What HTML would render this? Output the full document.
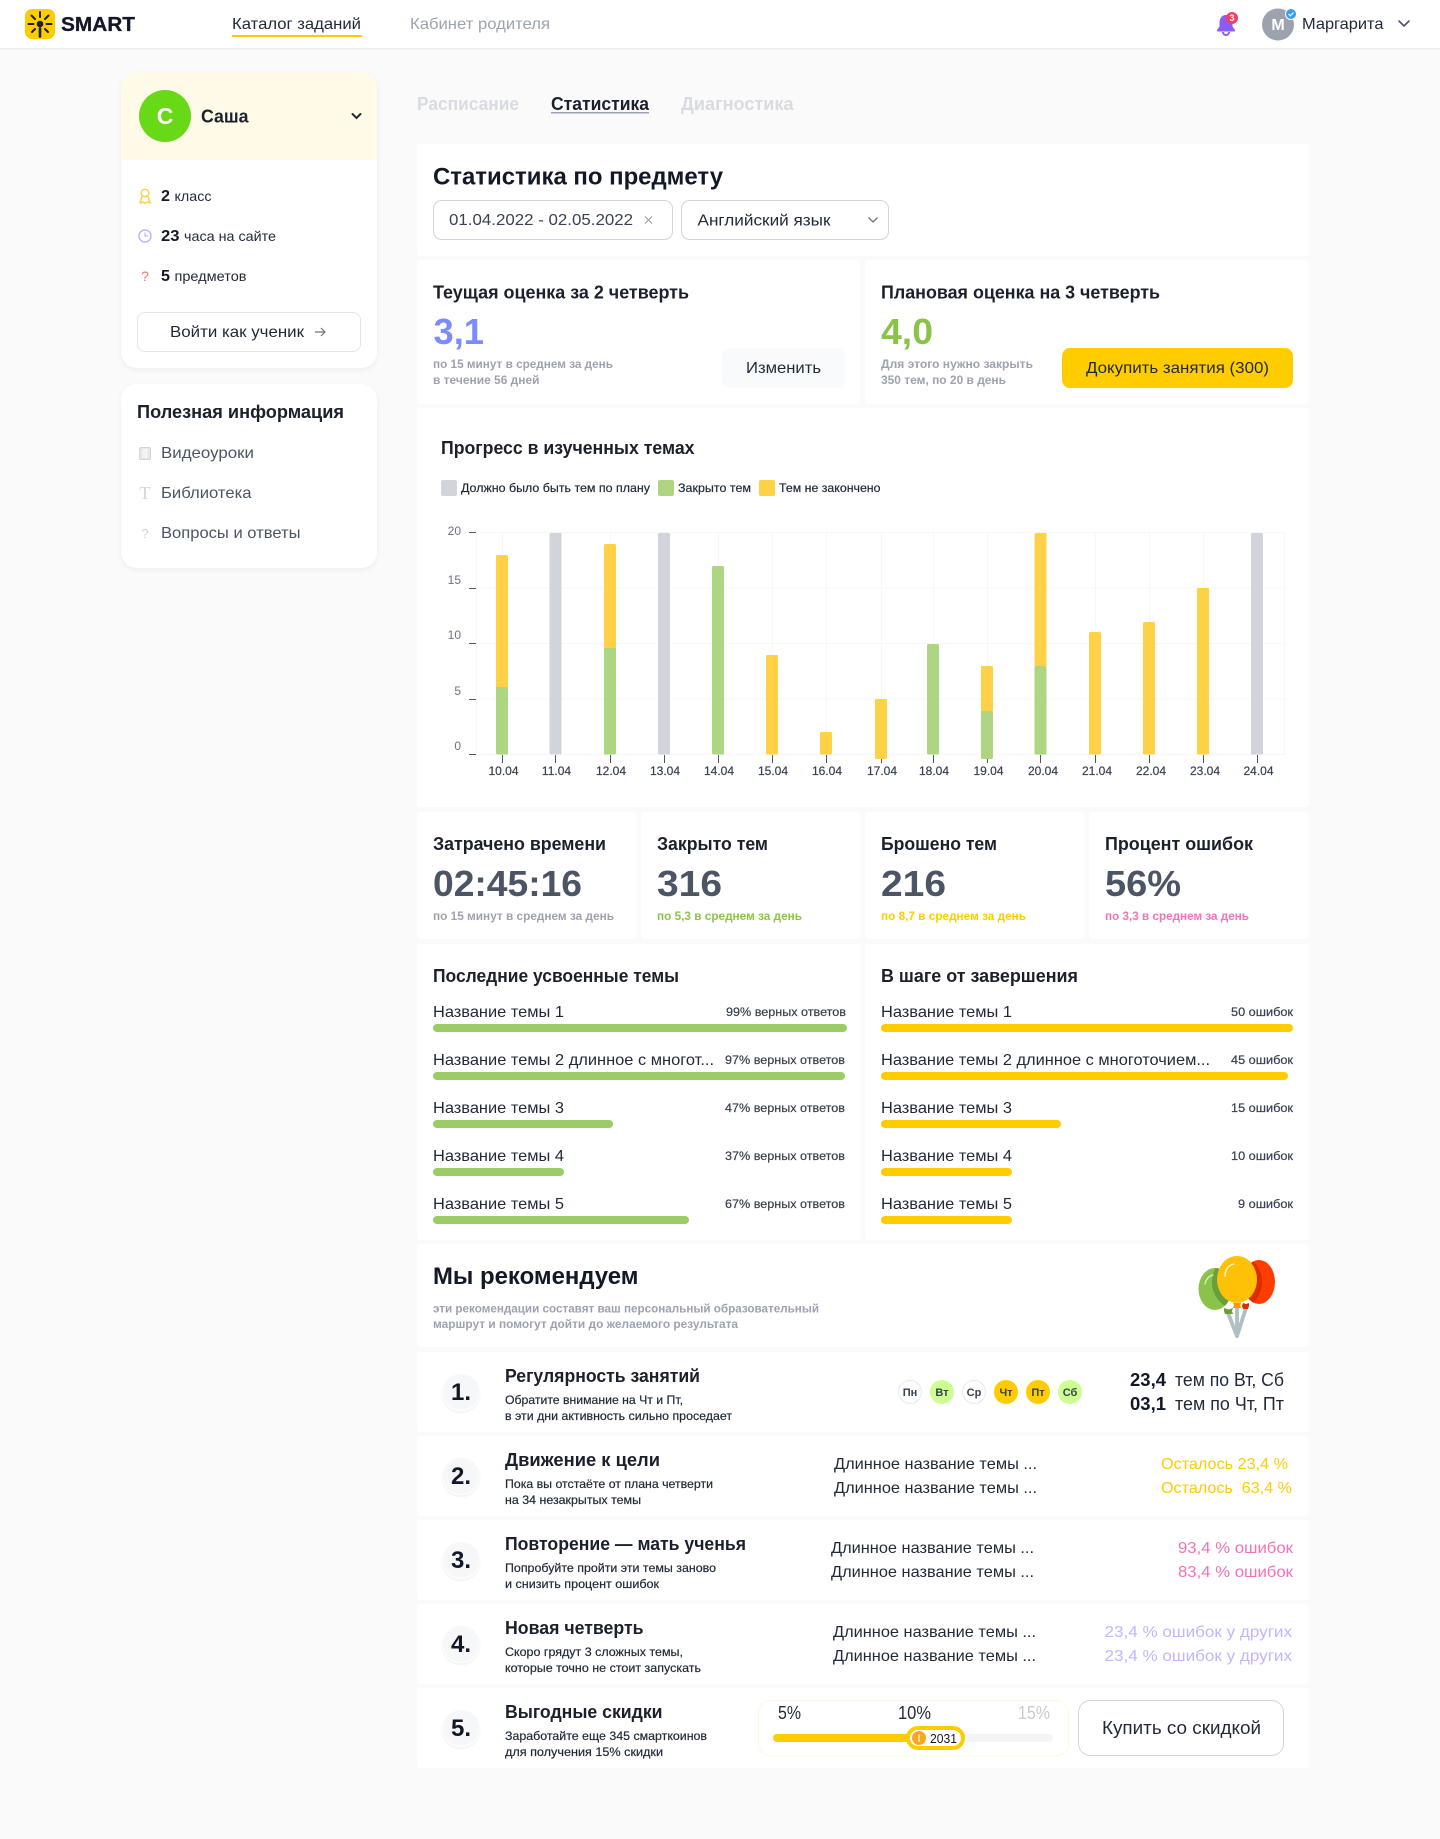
<!DOCTYPE html>
<html lang="ru">
<head>
<meta charset="utf-8">
<title>SMART — Статистика</title>
<style>
html,body{margin:0;padding:0;background:#fafafa}
body{position:relative;width:1440px;height:1839px;overflow:hidden;font-family:"Liberation Sans",sans-serif}
.b{position:absolute;background:#fff;border-radius:4px}
.s{border-radius:16px;box-shadow:0 2px 6px rgba(17,24,39,.05)}
svg{position:absolute;left:0;top:0}
text{font-family:"Liberation Sans",sans-serif;fill:#111827;font-size:16px}
.h18{font-size:18px;font-weight:700;fill:#1a202c}
.h24{font-size:24px;font-weight:700;fill:#111827}
.m16{font-size:16px;fill:#1f2937}
.m18{font-size:18px;fill:#1f2937}
.g12{font-size:12px;font-weight:700;fill:#9ca3af}
.d12{font-size:12px;fill:#1f2937;stroke:#1f2937;stroke-width:.2}
.b12{font-size:12px;stroke:#1f2937;stroke-width:.2;fill:#1f2937}
.l12{font-size:12px;fill:#374151;stroke:#374151;stroke-width:.2}
.v{font-size:36px;font-weight:700;fill:#4b5563}
.yl{font-size:12px;fill:#6b7280}
.dy{font-size:11px;fill:#374151;text-anchor:middle;font-weight:700}
.gr{stroke:#f6f7f8;stroke-width:1;fill:none}
.tk{stroke:#4b5563;stroke-width:1;fill:none}
</style>
</head>
<body>
<div class="b" style="left:0;top:0;width:1440px;height:48px;border-radius:0;box-shadow:0 1px 2px rgba(0,0,0,.08)"></div>
<div class="b s" style="left:121px;top:72px;width:256px;height:296px;overflow:hidden"><div style="height:88px;background:#fffbe8"></div></div>
<div class="b s" style="left:121px;top:384px;width:256px;height:184px"></div>
<div class="b" style="left:417px;top:144px;width:892px;height:112px"></div>
<div class="b" style="left:417px;top:260px;width:443px;height:144px"></div>
<div class="b" style="left:865px;top:260px;width:444px;height:144px"></div>
<div class="b" style="left:417px;top:408px;width:892px;height:399px"></div>
<div class="b" style="left:417px;top:812px;width:220px;height:127px"></div>
<div class="b" style="left:641px;top:812px;width:220px;height:127px"></div>
<div class="b" style="left:865px;top:812px;width:220px;height:127px"></div>
<div class="b" style="left:1089px;top:812px;width:220px;height:127px"></div>
<div class="b" style="left:417px;top:944px;width:444px;height:296px"></div>
<div class="b" style="left:865px;top:944px;width:444px;height:296px"></div>
<div class="b" style="left:417px;top:1244px;width:892px;height:103px"></div>
<div class="b" style="left:417px;top:1352px;width:892px;height:80px"></div>
<div class="b" style="left:417px;top:1436px;width:892px;height:80px"></div>
<div class="b" style="left:417px;top:1520px;width:892px;height:80px"></div>
<div class="b" style="left:417px;top:1604px;width:892px;height:80px"></div>
<div class="b" style="left:417px;top:1688px;width:892px;height:80px"></div>

<svg width="1440" height="1839" viewBox="0 0 1440 1839" xmlns="http://www.w3.org/2000/svg">
<defs>
<clipPath id="cg"><ellipse cx="1215" cy="1289" rx="16.500" ry="21"/></clipPath>
<clipPath id="cr"><ellipse cx="1259" cy="1282" rx="16" ry="22"/></clipPath>
</defs>
<!-- header -->
<rect x="25" y="9" width="30" height="30" rx="7" fill="#ffcc00"/>
<g stroke="#1a202c" stroke-width="2" stroke-linecap="round" fill="none">
<path d="M40 12v5M31.500 15.500l3.500 3.500M48.500 15.500l-3.500 3.500M28.500 24h5M46.500 24h5M32 32l3-3M48 32l-3-3"/>
<path d="M40 28.500v8" stroke-width="2.600"/>
</g>
<circle cx="40" cy="24" r="3.300" fill="#1a202c"/>
<text x="61" y="31" style="font-size:20px;font-weight:700;fill:#111827;stroke:#111827;stroke-width:.3" textLength="74" lengthAdjust="spacingAndGlyphs">SMART</text>
<text x="232" y="29" class="m16" textLength="129" lengthAdjust="spacingAndGlyphs">Каталог заданий</text>
<rect x="232" y="35" width="130" height="2" fill="#ffcc00"/>
<text x="410" y="29" class="m16" style="fill:#9ca3af" textLength="140" lengthAdjust="spacingAndGlyphs">Кабинет родителя</text>
<path d="M1226 15c-4.500 0-6.500 3.500-6.500 8v3.500l-2.500 3.500c-.5.8 0 1.500 1 1.500h16c1 0 1.500-.7 1-1.500l-2.500-3.500V23c0-4.500-2-8-6.500-8z" fill="#8b5cf6"/>
<path d="M1223 32a3 3 0 0 0 6 0" fill="none" stroke="#8b5cf6" stroke-width="2"/>
<circle cx="1232" cy="18" r="6" fill="#f43f5e"/>
<text x="1232" y="21" style="font-size:9px;font-weight:700;fill:#fff;text-anchor:middle">3</text>
<circle cx="1278" cy="24.500" r="16" fill="#9ca3af"/>
<text x="1278" y="30" style="font-size:16px;font-weight:700;fill:#fff;text-anchor:middle">М</text>
<circle cx="1291" cy="14" r="5.500" fill="#3b9df0" stroke="#fff" stroke-width="1"/>
<path d="M1288.500 14l1.800 1.800 3.200-3.300" fill="none" stroke="#fff" stroke-width="1.200"/>
<text x="1302" y="29" class="m16" textLength="81.500" lengthAdjust="spacingAndGlyphs">Маргарита</text>
<path d="M1399 21l5 5 5-5" fill="none" stroke="#4b5563" stroke-width="1.600" stroke-linecap="round"/>

<!-- sidebar -->
<circle cx="165" cy="116" r="26" fill="#67d916"/>
<text x="165" y="124" style="font-size:23px;font-weight:700;fill:#fff;text-anchor:middle">С</text>
<text x="201" y="122.500" class="h18" textLength="47.500" lengthAdjust="spacingAndGlyphs">Саша</text>
<path d="M352.500 114l4 4 4-4" fill="none" stroke="#1f2937" stroke-width="2" stroke-linecap="round"/>

<g fill="none" stroke="#fcd34d" stroke-width="1.500"><circle cx="145" cy="193" r="3.800"/><path d="M142 196.500l-2 6.500 3-1 2 1.500 2-1.500 3 1-2-6.500"/></g>
<text x="161" y="201" style="font-size:16px;font-weight:700" textLength="9" lengthAdjust="spacingAndGlyphs">2</text>
<text x="174.500" y="201" style="font-size:14px;fill:#1f2937" textLength="37" lengthAdjust="spacingAndGlyphs">класс</text>
<circle cx="145" cy="236" r="6" fill="none" stroke="#c4b5fd" stroke-width="1.500"/>
<path d="M145 232.500V236h3" fill="none" stroke="#c4b5fd" stroke-width="1.200"/>
<text x="161" y="241" style="font-size:16px;font-weight:700" textLength="18.500" lengthAdjust="spacingAndGlyphs">23</text>
<text x="184" y="241" style="font-size:14px;fill:#1f2937" textLength="92" lengthAdjust="spacingAndGlyphs">часа на сайте</text>
<text x="145" y="281" style="font-size:14px;fill:#f87171;text-anchor:middle">?</text>
<text x="161" y="281" style="font-size:16px;font-weight:700" textLength="9" lengthAdjust="spacingAndGlyphs">5</text>
<text x="174.500" y="281" style="font-size:14px;fill:#1f2937" textLength="72" lengthAdjust="spacingAndGlyphs">предметов</text>
<rect x="137.500" y="312.500" width="223" height="39" rx="7.500" fill="#fff" stroke="#e5e7eb"/>
<text x="170" y="337" class="m16" textLength="134" lengthAdjust="spacingAndGlyphs">Войти как ученик</text>
<path d="M315 332h10M321 328l4 4-4 4" fill="none" stroke="#6b7280" stroke-width="1.200"/>

<text x="137" y="418" class="h18" textLength="207" lengthAdjust="spacingAndGlyphs">Полезная информация</text>
<rect x="139.500" y="447.500" width="11" height="12" rx="1.500" fill="#e5e7eb" stroke="#d1d5db"/>
<rect x="142.500" y="449" width="5" height="9" fill="#f3f4f6"/>
<text x="161" y="458" class="m16" style="fill:#4b5563" textLength="93" lengthAdjust="spacingAndGlyphs">Видеоуроки</text>
<text x="145" y="499" style="font-family:'Liberation Serif',serif;font-size:18px;fill:#d1d5db;text-anchor:middle">T</text>
<text x="161" y="498" class="m16" style="fill:#4b5563" textLength="90.500" lengthAdjust="spacingAndGlyphs">Библиотека</text>
<text x="145" y="538" style="font-size:13px;fill:#d1d5db;text-anchor:middle">?</text>
<text x="161" y="538" class="m16" style="fill:#4b5563" textLength="139.500" lengthAdjust="spacingAndGlyphs">Вопросы и ответы</text>

<!-- tabs -->
<text x="417" y="110" class="h18" style="fill:#d8dbe0" textLength="102" lengthAdjust="spacingAndGlyphs">Расписание</text>
<text x="551" y="110" class="h18" textLength="98" lengthAdjust="spacingAndGlyphs">Статистика</text>
<rect x="551" y="112" width="98" height="1.500" fill="#9ca3af"/>
<text x="681" y="110" class="h18" style="fill:#d8dbe0" textLength="112.500" lengthAdjust="spacingAndGlyphs">Диагностика</text>

<!-- subject -->
<text x="433" y="184.500" class="h24" textLength="290" lengthAdjust="spacingAndGlyphs">Статистика по предмету</text>
<rect x="433.500" y="200.500" width="239" height="39" rx="8" fill="#fff" stroke="#d1d5db"/>
<text x="449" y="225" class="m16" style="fill:#374151" textLength="184" lengthAdjust="spacingAndGlyphs">01.04.2022 - 02.05.2022</text>
<path d="M645 216.500l7 7M652 216.500l-7 7" stroke="#9ca3af" stroke-width="1.200"/>
<rect x="681.500" y="200.500" width="207" height="39" rx="8" fill="#fff" stroke="#d1d5db"/>
<text x="697.500" y="225.500" class="m16" textLength="133" lengthAdjust="spacingAndGlyphs">Английский язык</text>
<path d="M868.500 217.500l4.500 4.500 4.500-4.500" fill="none" stroke="#6b7280" stroke-width="1.300"/>

<!-- grades -->
<text x="433" y="298.500" class="h18" textLength="256" lengthAdjust="spacingAndGlyphs">Теущая оценка за 2 четверть</text>
<text x="881" y="298.500" class="h18" textLength="279" lengthAdjust="spacingAndGlyphs">Плановая оценка на 3 четверть</text>
<text x="433.500" y="344" class="v" style="fill:#7c8cff" textLength="50.500" lengthAdjust="spacingAndGlyphs">3,1</text>
<text x="881" y="344" class="v" style="fill:#8bc34a" textLength="52" lengthAdjust="spacingAndGlyphs">4,0</text>
<text x="433" y="368" class="g12" textLength="180" lengthAdjust="spacingAndGlyphs">по 15 минут в среднем за день</text>
<text x="433" y="384" class="g12" textLength="106.500" lengthAdjust="spacingAndGlyphs">в течение 56 дней</text>
<text x="881" y="368" class="g12" textLength="152" lengthAdjust="spacingAndGlyphs">Для этого нужно закрыть</text>
<text x="881" y="384" class="g12" textLength="125" lengthAdjust="spacingAndGlyphs">350 тем, по 20 в день</text>
<rect x="722" y="348" width="123" height="40" rx="8" fill="#f9fafb"/>
<text x="746" y="373" class="m16" textLength="75" lengthAdjust="spacingAndGlyphs">Изменить</text>
<rect x="1062" y="348" width="231" height="40" rx="8" fill="#ffcc00"/>
<text x="1086" y="373" class="m16" textLength="183" lengthAdjust="spacingAndGlyphs">Докупить занятия (300)</text>

<!-- chart -->
<text x="441" y="454" class="h18" textLength="253.500" lengthAdjust="spacingAndGlyphs">Прогресс в изученных темах</text>
<rect x="441" y="480" width="16" height="16" rx="2" fill="#d1d5db"/>
<text x="461" y="492" class="d12" textLength="189" lengthAdjust="spacingAndGlyphs">Должно было быть тем по плану</text>
<rect x="658" y="480" width="16" height="16" rx="2" fill="#aed581"/>
<text x="678" y="492" class="d12" textLength="73" lengthAdjust="spacingAndGlyphs">Закрыто тем</text>
<rect x="759" y="480" width="16" height="16" rx="2" fill="#ffd147"/>
<text x="779" y="492" class="d12" textLength="101.500" lengthAdjust="spacingAndGlyphs">Тем не закончено</text>

<g class="gr">
<path d="M476.500 532.500H1285M476.500 588H1285M476.500 643.500H1285M476.500 699H1285M476.500 754.500H1285"/>
<path d="M476.500 532.500V754.500M502.500 532.500V754.500M555.500 532.500V754.500M610.500 532.500V754.500M664.500 532.500V754.500M718.500 532.500V754.500M772.500 532.500V754.500M826.500 532.500V754.500M881.500 532.500V754.500M933.500 532.500V754.500M987.500 532.500V754.500M1040.500 532.500V754.500M1095.500 532.500V754.500M1149.500 532.500V754.500M1203.500 532.500V754.500M1257.500 532.500V754.500M1284.500 532.500V754.500"/>
</g>
<path class="tk" d="M469 532.500h7M469 588.500h7M469 643.500h7M469 699.500h7M469 754.500h7"/>
<path class="tk" d="M502.500 755v8M555.500 755v8M610.500 755v8M664.500 755v8M718.500 755v8M772.500 755v8M826.500 755v8M881.500 755v8M933.500 755v8M987.500 755v8M1040.500 755v8M1095.500 755v8M1149.500 755v8M1203.500 755v8M1257.500 755v8"/>
<text x="461" y="535" class="yl" style="text-anchor:end">20</text>
<text x="461" y="584" class="yl" style="text-anchor:end">15</text>
<text x="461" y="639" class="yl" style="text-anchor:end">10</text>
<text x="461" y="695" class="yl" style="text-anchor:end">5</text>
<text x="461" y="750" class="yl" style="text-anchor:end">0</text>
<!-- bars -->
<g>
<rect x="496" y="555" width="12" height="140" rx="1.500" fill="#ffd147"/><rect x="496" y="687" width="12" height="67.500" rx="1.500" fill="#aed581"/>
<rect x="549.500" y="533" width="12" height="221.500" rx="1.500" fill="#d1d5db"/>
<rect x="604" y="544" width="12" height="112" rx="1.500" fill="#ffd147"/><rect x="604" y="648" width="12" height="106.500" rx="1.500" fill="#aed581"/>
<rect x="658" y="533" width="12" height="221.500" rx="1.500" fill="#d1d5db"/>
<rect x="712" y="566" width="12" height="188.500" rx="1.500" fill="#aed581"/>
<rect x="766" y="655" width="12" height="99.500" rx="1.500" fill="#ffd147"/>
<rect x="820" y="732" width="12" height="22.500" rx="1.500" fill="#ffd147"/>
<rect x="875" y="699" width="12" height="60" rx="1.500" fill="#ffd147"/>
<rect x="927" y="644" width="12" height="110.500" rx="1.500" fill="#aed581"/>
<rect x="981" y="666" width="12" height="50" rx="1.500" fill="#ffd147"/><rect x="981" y="711" width="12" height="48" rx="1.500" fill="#aed581"/>
<rect x="1034.500" y="533" width="12" height="140" rx="1.500" fill="#ffd147"/><rect x="1034.500" y="666" width="12" height="88.500" rx="1.500" fill="#aed581"/>
<rect x="1089" y="632" width="12" height="122.500" rx="1.500" fill="#ffd147"/>
<rect x="1143" y="622" width="12" height="132.500" rx="1.500" fill="#ffd147"/>
<rect x="1197" y="588" width="12" height="166.500" rx="1.500" fill="#ffd147"/>
<rect x="1251" y="533" width="12" height="221.500" rx="1.500" fill="#d1d5db"/>
</g>
<g>
<text x="503.500" y="775" class="l12" text-anchor="middle">10.04</text>
<text x="556.500" y="775" class="l12" text-anchor="middle">11.04</text>
<text x="611" y="775" class="l12" text-anchor="middle">12.04</text>
<text x="665" y="775" class="l12" text-anchor="middle">13.04</text>
<text x="719" y="775" class="l12" text-anchor="middle">14.04</text>
<text x="773" y="775" class="l12" text-anchor="middle">15.04</text>
<text x="827" y="775" class="l12" text-anchor="middle">16.04</text>
<text x="882" y="775" class="l12" text-anchor="middle">17.04</text>
<text x="934" y="775" class="l12" text-anchor="middle">18.04</text>
<text x="988.500" y="775" class="l12" text-anchor="middle">19.04</text>
<text x="1043" y="775" class="l12" text-anchor="middle">20.04</text>
<text x="1097" y="775" class="l12" text-anchor="middle">21.04</text>
<text x="1151" y="775" class="l12" text-anchor="middle">22.04</text>
<text x="1205" y="775" class="l12" text-anchor="middle">23.04</text>
<text x="1258.500" y="775" class="l12" text-anchor="middle">24.04</text>
</g>

<!-- stats -->
<text x="433" y="850" class="h18" textLength="173" lengthAdjust="spacingAndGlyphs">Затрачено времени</text>
<text x="657" y="850" class="h18" textLength="111" lengthAdjust="spacingAndGlyphs">Закрыто тем</text>
<text x="881" y="850" class="h18" textLength="116" lengthAdjust="spacingAndGlyphs">Брошено тем</text>
<text x="1105" y="850" class="h18" textLength="148" lengthAdjust="spacingAndGlyphs">Процент ошибок</text>
<text x="433" y="896" class="v" textLength="149" lengthAdjust="spacingAndGlyphs">02:45:16</text>
<text x="657" y="896" class="v" textLength="65" lengthAdjust="spacingAndGlyphs">316</text>
<text x="881" y="896" class="v" textLength="65" lengthAdjust="spacingAndGlyphs">216</text>
<text x="1105" y="896" class="v" textLength="76" lengthAdjust="spacingAndGlyphs">56%</text>
<text x="433" y="920" class="g12" textLength="181" lengthAdjust="spacingAndGlyphs">по 15 минут в среднем за день</text>
<text x="657" y="920" class="g12" style="fill:#8bc34a" textLength="145" lengthAdjust="spacingAndGlyphs">по 5,3 в среднем за день</text>
<text x="881" y="920" class="g12" style="fill:#ffcc00" textLength="145" lengthAdjust="spacingAndGlyphs">по 8,7 в среднем за день</text>
<text x="1105" y="920" class="g12" style="fill:#f472b6" textLength="144" lengthAdjust="spacingAndGlyphs">по 3,3 в среднем за день</text>

<!-- lists -->
<text x="433" y="982" class="h18" textLength="246" lengthAdjust="spacingAndGlyphs">Последние усвоенные темы</text>
<text x="881" y="982" class="h18" textLength="197" lengthAdjust="spacingAndGlyphs">В шаге от завершения</text>

<text x="433" y="1017" class="m16" textLength="131" lengthAdjust="spacingAndGlyphs">Название темы 1</text>
<text x="726" y="1016" class="l12" textLength="120" lengthAdjust="spacingAndGlyphs">99% верных ответов</text>
<rect x="433" y="1024" width="414" height="8" rx="4" fill="#9ccc65"/>
<text x="433" y="1065" class="m16" textLength="281" lengthAdjust="spacingAndGlyphs">Название темы 2 длинное с многот...</text>
<text x="725" y="1064" class="l12" textLength="120" lengthAdjust="spacingAndGlyphs">97% верных ответов</text>
<rect x="433" y="1072" width="412" height="8" rx="4" fill="#9ccc65"/>
<text x="433" y="1113" class="m16" textLength="131" lengthAdjust="spacingAndGlyphs">Название темы 3</text>
<text x="725" y="1112" class="l12" textLength="120" lengthAdjust="spacingAndGlyphs">47% верных ответов</text>
<rect x="433" y="1120" width="180" height="8" rx="4" fill="#9ccc65"/>
<text x="433" y="1161" class="m16" textLength="131" lengthAdjust="spacingAndGlyphs">Название темы 4</text>
<text x="725" y="1160" class="l12" textLength="120" lengthAdjust="spacingAndGlyphs">37% верных ответов</text>
<rect x="433" y="1168" width="131" height="8" rx="4" fill="#9ccc65"/>
<text x="433" y="1209" class="m16" textLength="131" lengthAdjust="spacingAndGlyphs">Название темы 5</text>
<text x="725" y="1208" class="l12" textLength="120" lengthAdjust="spacingAndGlyphs">67% верных ответов</text>
<rect x="433" y="1216" width="256" height="8" rx="4" fill="#9ccc65"/>

<text x="881" y="1017" class="m16" textLength="131" lengthAdjust="spacingAndGlyphs">Название темы 1</text>
<text x="1231" y="1016" class="l12" textLength="62" lengthAdjust="spacingAndGlyphs">50 ошибок</text>
<rect x="881" y="1024" width="412" height="8" rx="4" fill="#ffcc00"/>
<text x="881" y="1065" class="m16" textLength="329" lengthAdjust="spacingAndGlyphs">Название темы 2 длинное с многоточием...</text>
<text x="1231" y="1064" class="l12" textLength="62" lengthAdjust="spacingAndGlyphs">45 ошибок</text>
<rect x="881" y="1072" width="407" height="8" rx="4" fill="#ffcc00"/>
<text x="881" y="1113" class="m16" textLength="131" lengthAdjust="spacingAndGlyphs">Название темы 3</text>
<text x="1231" y="1112" class="l12" textLength="62" lengthAdjust="spacingAndGlyphs">15 ошибок</text>
<rect x="881" y="1120" width="180" height="8" rx="4" fill="#ffcc00"/>
<text x="881" y="1161" class="m16" textLength="131" lengthAdjust="spacingAndGlyphs">Название темы 4</text>
<text x="1231" y="1160" class="l12" textLength="62" lengthAdjust="spacingAndGlyphs">10 ошибок</text>
<rect x="881" y="1168" width="131" height="8" rx="4" fill="#ffcc00"/>
<text x="881" y="1209" class="m16" textLength="131" lengthAdjust="spacingAndGlyphs">Название темы 5</text>
<text x="1238" y="1208" class="l12" textLength="55" lengthAdjust="spacingAndGlyphs">9 ошибок</text>
<rect x="881" y="1216" width="131" height="8" rx="4" fill="#ffcc00"/>

<!-- recommend -->
<text x="433" y="1284" class="h24" textLength="205.500" lengthAdjust="spacingAndGlyphs">Мы рекомендуем</text>
<text x="433" y="1312.500" class="g12" textLength="386" lengthAdjust="spacingAndGlyphs">эти рекомендации составят ваш персональный образовательный</text>
<text x="433" y="1328" class="g12" textLength="305" lengthAdjust="spacingAndGlyphs">маршрут и помогут дойти до желаемого результата</text>
<!-- balloons -->
<path d="M1228 1313l9 23M1237 1307v29M1246 1308l-9 28" fill="none" stroke="#b0bec5" stroke-width="3.800" stroke-linecap="round"/>
<ellipse cx="1215" cy="1289" rx="16.500" ry="21" fill="#8bc34a"/>
<g clip-path="url(#cg)"><ellipse cx="1237" cy="1282" rx="25" ry="27" fill="#689f38"/></g>
<path d="M1224 1308l5 1.500 4-1.500-1 3 1 3h-8l-1-3z" fill="#689f38"/>
<ellipse cx="1259" cy="1282" rx="16" ry="22" fill="#ff3d00"/>
<g clip-path="url(#cr)"><ellipse cx="1237" cy="1282" rx="25" ry="27" fill="#dd2c00"/></g>
<path d="M1243 1303l3 1 3-1v3l-1 3h-5l-1-3z" fill="#dd2c00"/>
<ellipse cx="1237" cy="1279.500" rx="20" ry="23.500" fill="#ffc107"/>
<path d="M1233 1303h8l-1 2.500 1 2.500h-8l1-2.500z" fill="#ff9800"/>
<path d="M1225 1276c0-7 4-11 9-12" fill="none" stroke="#fff6d8" stroke-width="1.400" stroke-linecap="round"/>
<path d="M1205 1284c1-5 4-8 8-9" fill="none" stroke="#dcedc8" stroke-width="1.200" stroke-linecap="round"/>

<!-- rows -->
<g>
<circle cx="461" cy="1393" r="18.500" fill="#fff" style="filter:drop-shadow(0 1px 1px rgba(0,0,0,.08))"/>
<circle cx="461" cy="1392" r="18" fill="#f6f7f8"/>
<circle cx="461" cy="1477" r="18.500" fill="#fff" style="filter:drop-shadow(0 1px 1px rgba(0,0,0,.08))"/>
<circle cx="461" cy="1476" r="18" fill="#f6f7f8"/>
<circle cx="461" cy="1561" r="18.500" fill="#fff" style="filter:drop-shadow(0 1px 1px rgba(0,0,0,.08))"/>
<circle cx="461" cy="1560" r="18" fill="#f6f7f8"/>
<circle cx="461" cy="1645" r="18.500" fill="#fff" style="filter:drop-shadow(0 1px 1px rgba(0,0,0,.08))"/>
<circle cx="461" cy="1644" r="18" fill="#f6f7f8"/>
<circle cx="461" cy="1729" r="18.500" fill="#fff" style="filter:drop-shadow(0 1px 1px rgba(0,0,0,.08))"/>
<circle cx="461" cy="1728" r="18" fill="#f6f7f8"/>
</g>
<g>
<text x="461" y="1400" style="font-size:24px;font-weight:700;text-anchor:middle">1.</text>
<text x="461" y="1484" style="font-size:24px;font-weight:700;text-anchor:middle">2.</text>
<text x="461" y="1568" style="font-size:24px;font-weight:700;text-anchor:middle">3.</text>
<text x="461" y="1652" style="font-size:24px;font-weight:700;text-anchor:middle">4.</text>
<text x="461" y="1736" style="font-size:24px;font-weight:700;text-anchor:middle">5.</text>
</g>

<text x="505" y="1382" class="h18" textLength="195" lengthAdjust="spacingAndGlyphs">Регулярность занятий</text>
<text x="505" y="1404" class="b12" textLength="178" lengthAdjust="spacingAndGlyphs">Обратите внимание на Чт и Пт,</text>
<text x="505" y="1420" class="b12" textLength="227" lengthAdjust="spacingAndGlyphs">в эти дни активность сильно проседает</text>
<circle cx="910" cy="1392" r="11.500" fill="#fff" stroke="#e5e7eb"/>
<circle cx="942" cy="1392" r="12" fill="#ccff90"/>
<circle cx="974" cy="1392" r="11.500" fill="#fff" stroke="#e5e7eb"/>
<circle cx="1006" cy="1392" r="12" fill="#ffcc00"/>
<circle cx="1038" cy="1392" r="12" fill="#ffcc00"/>
<circle cx="1070" cy="1392" r="12" fill="#ccff90"/>
<text x="910" y="1396" class="dy">Пн</text>
<text x="942" y="1396" class="dy">Вт</text>
<text x="974" y="1396" class="dy">Ср</text>
<text x="1006" y="1396" class="dy">Чт</text>
<text x="1038" y="1396" class="dy">Пт</text>
<text x="1070" y="1396" class="dy">Сб</text>
<text x="1130" y="1386" class="h18" style="fill:#111827" textLength="36" lengthAdjust="spacingAndGlyphs">23,4</text>
<text x="1175" y="1386" class="m18" textLength="109" lengthAdjust="spacingAndGlyphs">тем по Вт, Сб</text>
<text x="1130" y="1410" class="h18" style="fill:#111827" textLength="36" lengthAdjust="spacingAndGlyphs">03,1</text>
<text x="1175" y="1410" class="m18" textLength="109" lengthAdjust="spacingAndGlyphs">тем по Чт, Пт</text>

<text x="505" y="1466" class="h18" textLength="155" lengthAdjust="spacingAndGlyphs">Движение к цели</text>
<text x="505" y="1488" class="b12" textLength="208" lengthAdjust="spacingAndGlyphs">Пока вы отстаёте от плана четверти</text>
<text x="505" y="1504" class="b12" textLength="136" lengthAdjust="spacingAndGlyphs">на 34 незакрытых темы</text>
<text x="834" y="1469" class="m16" textLength="203" lengthAdjust="spacingAndGlyphs">Длинное название темы ...</text>
<text x="834" y="1493" class="m16" textLength="203" lengthAdjust="spacingAndGlyphs">Длинное название темы ...</text>
<text x="1161" y="1469" class="m16" style="fill:#ffcc00" textLength="127" lengthAdjust="spacingAndGlyphs">Осталось 23,4 %</text>
<text x="1161" y="1493" class="m16" style="fill:#ffcc00;white-space:pre" textLength="131" lengthAdjust="spacingAndGlyphs">Осталось  63,4 %</text>

<text x="505" y="1550" class="h18" textLength="241" lengthAdjust="spacingAndGlyphs">Повторение — мать ученья</text>
<text x="505" y="1572" class="b12" textLength="211" lengthAdjust="spacingAndGlyphs">Попробуйте пройти эти темы заново</text>
<text x="505" y="1588" class="b12" textLength="154" lengthAdjust="spacingAndGlyphs">и снизить процент ошибок</text>
<text x="831" y="1553" class="m16" textLength="203" lengthAdjust="spacingAndGlyphs">Длинное название темы ...</text>
<text x="831" y="1577" class="m16" textLength="203" lengthAdjust="spacingAndGlyphs">Длинное название темы ...</text>
<text x="1178" y="1553" class="m16" style="fill:#f472b6" textLength="115" lengthAdjust="spacingAndGlyphs">93,4 % ошибок</text>
<text x="1178" y="1577" class="m16" style="fill:#f472b6" textLength="115" lengthAdjust="spacingAndGlyphs">83,4 % ошибок</text>

<text x="505" y="1634" class="h18" textLength="138.500" lengthAdjust="spacingAndGlyphs">Новая четверть</text>
<text x="505" y="1656" class="b12" textLength="178" lengthAdjust="spacingAndGlyphs">Скоро грядут 3 сложных темы,</text>
<text x="505" y="1672" class="b12" textLength="196" lengthAdjust="spacingAndGlyphs">которые точно не стоит запускать</text>
<text x="833" y="1637" class="m16" textLength="203" lengthAdjust="spacingAndGlyphs">Длинное название темы ...</text>
<text x="833" y="1661" class="m16" textLength="203" lengthAdjust="spacingAndGlyphs">Длинное название темы ...</text>
<text x="1104.500" y="1637" class="m16" style="fill:#c4b5fd" textLength="187.500" lengthAdjust="spacingAndGlyphs">23,4 % ошибок у других</text>
<text x="1104.500" y="1661" class="m16" style="fill:#c4b5fd" textLength="187.500" lengthAdjust="spacingAndGlyphs">23,4 % ошибок у других</text>

<text x="505" y="1718" class="h18" textLength="157.500" lengthAdjust="spacingAndGlyphs">Выгодные скидки</text>
<text x="505" y="1740" class="b12" textLength="202" lengthAdjust="spacingAndGlyphs">Заработайте еще 345 смарткоинов</text>
<text x="505" y="1756" class="b12" textLength="158" lengthAdjust="spacingAndGlyphs">для получения 15% скидки</text>
<rect x="758.500" y="1700.500" width="310" height="55.500" rx="12" fill="#fff" stroke="#fff8e0"/>
<text x="778" y="1719" class="m18" textLength="23" lengthAdjust="spacingAndGlyphs">5%</text>
<text x="898" y="1719" class="m18" textLength="33" lengthAdjust="spacingAndGlyphs">10%</text>
<text x="1018" y="1719" class="m18" style="fill:#c9cbcf" textLength="32" lengthAdjust="spacingAndGlyphs">15%</text>
<rect x="773" y="1734" width="280" height="8" rx="4" fill="#f3f4f6"/>
<rect x="773" y="1734" width="140" height="8" rx="4" fill="#ffcc00"/>
<rect x="908" y="1728" width="55" height="20" rx="10" fill="#fff" stroke="#ffcc00" stroke-width="4"/>
<circle cx="919" cy="1738" r="7" fill="#fba61e"/>
<rect x="918" y="1734" width="2" height="8" rx="1" fill="#ffe39a"/>
<text x="930" y="1743" style="font-size:13px;fill:#111827" textLength="27" lengthAdjust="spacingAndGlyphs">2031</text>
<rect x="1078.500" y="1700.500" width="205" height="55" rx="12" fill="#fff" stroke="#d1d5db"/>
<text x="1102" y="1734" class="m18" textLength="159" lengthAdjust="spacingAndGlyphs">Купить со скидкой</text>
</svg>
</body>
</html>
